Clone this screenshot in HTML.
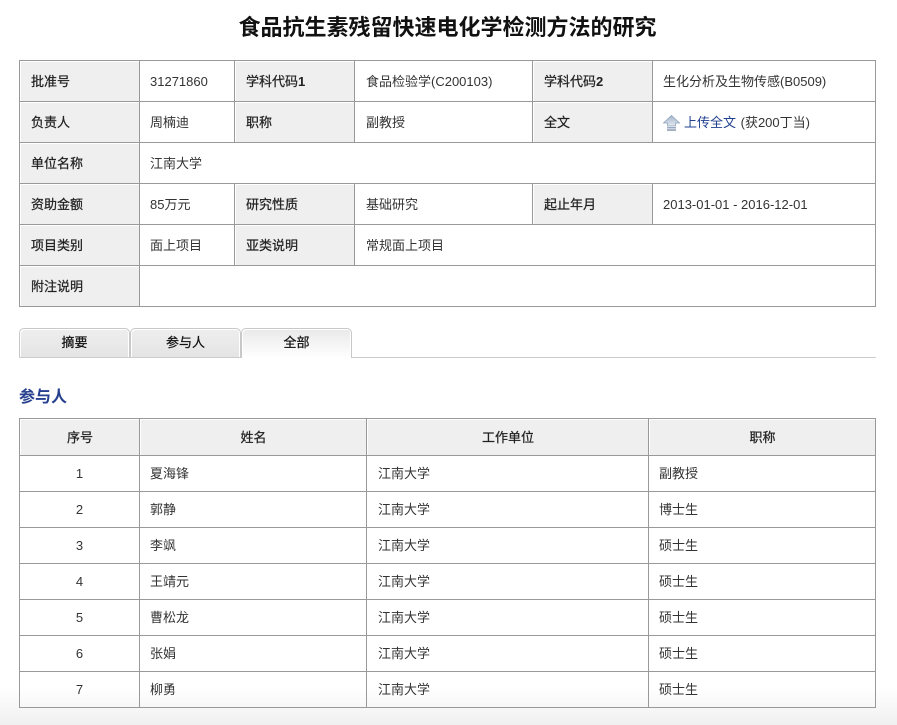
<!DOCTYPE html>
<html lang="zh">
<head>
<meta charset="utf-8">
<title>食品抗生素残留快速电化学检测方法的研究</title>
<style>
html,body{margin:0;padding:0}
body{width:897px;height:725px;position:relative;overflow:hidden;background:linear-gradient(to bottom,#fff 0,#fff 688px,#f0f0f0 725px);font-family:"Liberation Sans","Noto Sans CJK SC",sans-serif;font-size:13px;color:#333}
h1{position:absolute;left:0;top:12px;width:895px;margin:0;text-align:center;font-size:22px;line-height:32px;font-weight:bold;color:#111}
table{position:absolute;left:19px;border-collapse:collapse;table-layout:fixed;width:856px}
td,th{box-sizing:border-box;border:1px solid #999;padding:0 0 2px 11px;font-size:13px;font-weight:normal;text-align:left;color:#333;background:#fff;overflow:hidden;white-space:nowrap}
th{background:#efefef;box-shadow:inset 1px 1px 0 #fff;color:#222;-webkit-text-stroke:.25px #222}
th b{font-weight:bold;-webkit-text-stroke:0}
td.n{padding-left:10px}
td.l{padding-bottom:0}
#info{top:60px}
#info tr{height:41px}
#people{top:418px;background:transparent}
#people th{text-align:center;padding:0 0 2px 1px;height:37px}
#people td{height:36px;background:transparent}
#people td:first-child{text-align:center;padding:0;color:#333}
a{color:#1f3f8f;text-decoration:none;margin-right:1px}
.up{display:inline-block;vertical-align:-4px;margin:0 4px 0 0}
.tabline{position:absolute;left:19px;top:357px;width:857px;height:1px;background:#ccc}
.tab{position:absolute;top:328px;height:29px;box-sizing:border-box;width:111px;border:1px solid #c8c8c8;border-bottom:0;border-radius:5px 5px 0 0;background:linear-gradient(to bottom,#eee,#e4e4e4);box-shadow:inset 1px 1px 0 #fff,inset -1px 0 0 #fff;text-align:center;line-height:27px;font-size:13px;color:#111;-webkit-text-stroke:.25px #111}
.tab.on{background:linear-gradient(to bottom,#e9e9e9,#fff);height:30px}
h2{position:absolute;left:19px;top:388px;margin:0;font-size:16px;line-height:20px;font-weight:bold;color:#26408f}
</style>
</head>
<body>
<h1>食品抗生素残留快速电化学检测方法的研究</h1>
<table id="info">
<colgroup><col style="width:120px"><col style="width:95px"><col style="width:120px"><col style="width:178px"><col style="width:120px"><col style="width:223px"></colgroup>
<tr><th>批准号</th><td class="n l">31271860</td><th>学科代码<b>1</b></th><td>食品检验学(C200103)</td><th>学科代码<b>2</b></th><td class="n">生化分析及生物传感(B0509)</td></tr>
<tr><th>负责人</th><td class="n">周楠迪</td><th>职称</th><td>副教授</td><th>全文</th><td class="n"><svg class="up" width="17" height="16" viewBox="0 0 17 16"><defs><linearGradient id="g" x1="0" y1="0" x2="0" y2="1"><stop offset="0" stop-color="#a3b5cc"/><stop offset="1" stop-color="#e3e9f0"/></linearGradient></defs><path d="M8.5 .5 16.5 8H12.5V11H4.5V8H.5Z" fill="url(#g)" stroke="#8fa3bb" stroke-width=".8"/><rect x="4" y="12" width="9" height="1.5" fill="#9aabc0"/><rect x="4" y="14.3" width="9" height="1.5" fill="#8a9bb2"/></svg><a href="#">上传全文</a> (获200丁当)</td></tr>
<tr><th>单位名称</th><td class="n" colspan="5">江南大学</td></tr>
<tr><th>资助金额</th><td class="n">85万元</td><th>研究性质</th><td>基础研究</td><th>起止年月</th><td class="n l">2013-01-01 - 2016-12-01</td></tr>
<tr><th>项目类别</th><td class="n">面上项目</td><th>亚类说明</th><td colspan="3">常规面上项目</td></tr>
<tr><th>附注说明</th><td colspan="5"></td></tr>
</table>
<div class="tabline"></div>
<div class="tab" style="left:19px">摘要</div>
<div class="tab" style="left:130px">参与人</div>
<div class="tab on" style="left:241px">全部</div>
<h2>参与人</h2>
<table id="people">
<colgroup><col style="width:120px"><col style="width:227px"><col style="width:282px"><col style="width:227px"></colgroup>
<tr><th>序号</th><th>姓名</th><th>工作单位</th><th>职称</th></tr>
<tr><td>1</td><td class="n">夏海锋</td><td>江南大学</td><td class="n">副教授</td></tr>
<tr><td>2</td><td class="n">郭静</td><td>江南大学</td><td class="n">博士生</td></tr>
<tr><td>3</td><td class="n">李飒</td><td>江南大学</td><td class="n">硕士生</td></tr>
<tr><td>4</td><td class="n">王靖元</td><td>江南大学</td><td class="n">硕士生</td></tr>
<tr><td>5</td><td class="n">曹松龙</td><td>江南大学</td><td class="n">硕士生</td></tr>
<tr><td>6</td><td class="n">张娟</td><td>江南大学</td><td class="n">硕士生</td></tr>
<tr><td>7</td><td class="n">柳勇</td><td>江南大学</td><td class="n">硕士生</td></tr>
</table>
</body>
</html>
